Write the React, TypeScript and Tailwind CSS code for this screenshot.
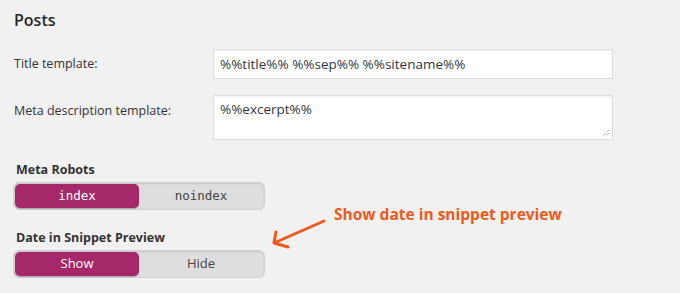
import React from 'react';

const font = { fontFamily: '"Open Sans", "Noto Sans", sans-serif' };

function Toggle({ options, selected, mono }: { options: string[]; selected: number; mono?: boolean }) {
    return (
        <div className="flex w-[252px] h-[28px] rounded-[6px] border border-[#cfcfcf] bg-[#dedede] p-[1px] shadow-[inset_0_1px_2px_rgba(0,0,0,0.12)]">
            {options.map((opt, i) => (
                <div
                    key={opt}
                    className={
                        'flex-1 flex items-center justify-center rounded-[5px] ' +
                        (mono ? 'text-[12.5px] ' : 'text-[13px] ') +
                        (i === selected ? 'bg-[#a4286a] text-white shadow-[0_1px_1px_rgba(0,0,0,0.25)]' : 'text-[#444]')
                    }
                    style={mono ? { fontFamily: '"DejaVu Sans Mono", "Liberation Mono", monospace' } : undefined}
                >
                    {opt}
                </div>
            ))}
        </div>
    );
}

export default function App() {
    return (
        <div className="w-[680px] h-[293px] bg-[#f1f1f1] text-[#23282d] relative overflow-hidden" style={font}>
            <div className="px-[14px] pt-[8px]">
                <h2 className="text-[16px] font-semibold leading-[24px]">Posts</h2>

                <div className="mt-[17px] flex items-center">
                    <label className="w-[199px] text-[12.5px] text-[#333]">Title template:</label>
                    <div className="w-[400px] h-[30px] bg-white border border-[#ddd] shadow-[inset_0_1px_2px_rgba(0,0,0,0.07)] flex items-center px-[6px] text-[13.5px] text-[#32373c]">
                        %%title%% %%sep%% %%sitename%%
                    </div>
                </div>

                <div className="mt-[16px] flex items-start">
                    <label className="w-[199px] text-[12.5px] text-[#333] pt-[7px]">Meta description template:</label>
                    <div className="relative w-[400px] h-[45px] bg-white border border-[#ddd] shadow-[inset_0_1px_2px_rgba(0,0,0,0.07)] px-[6px] pt-[3px] text-[13.5px] text-[#32373c]">
                        %%excerpt%%
                        <svg className="absolute right-[2px] bottom-[2px]" width="8" height="8" viewBox="0 0 8 8">
                            <path d="M7 1 L1 7 M7 4 L4 7" stroke="#888" strokeWidth="1" strokeDasharray="1 1" />
                        </svg>
                    </div>
                </div>

                <div className="mt-[21px] pl-[2px] text-[12.5px] font-bold text-[#333] leading-[18px]">Meta Robots</div>
                <div className="mt-[3px] -ml-[1px]">
                    <Toggle options={['index', 'noindex']} selected={0} mono />
                </div>

                <div className="mt-[19px] pl-[2px] text-[12.5px] font-bold text-[#333] leading-[18px]">Date in Snippet Preview</div>
                <div className="mt-[3px] -ml-[1px]">
                    <Toggle options={['Show', 'Hide']} selected={0} />
                </div>
            </div>

            <svg className="absolute left-[266px] top-[214px]" width="66" height="38" viewBox="0 0 66 38">
                <path d="M58 7 L8 29 M8 29 L10 18 M8 29 L22 33" stroke="#ef5a1c" strokeWidth="3" strokeLinecap="round" fill="none" />
            </svg>
            <div className="absolute left-[334px] top-[203px] text-[15.5px] font-bold text-[#ef5a1c]">
                Show date in snippet preview
            </div>
        </div>
    );
}
